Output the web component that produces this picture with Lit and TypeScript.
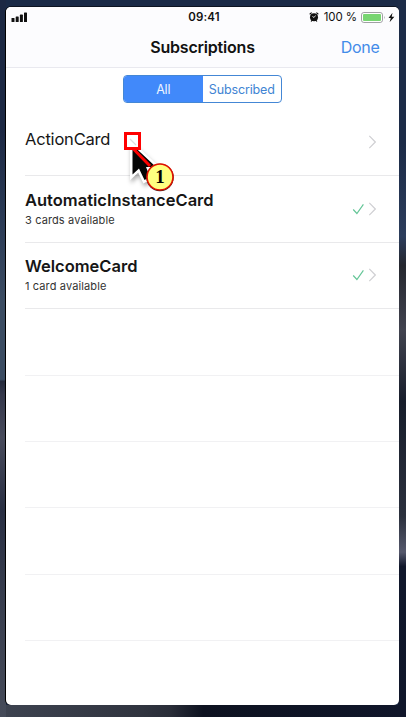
import { LitElement, html, css, svg, nothing } from "lit";
import { customElement, property } from "lit/decorators.js";

interface Subscription {
  name: string;
  detail?: string;
}

const subscriptions: Subscription[] = [
  { name: "ActionCard" },
  { name: "AutomaticInstanceCard", detail: "3 cards available" },
  { name: "WelcomeCard", detail: "1 card available" },
];

@customElement("status-bar")
class StatusBar extends LitElement {
  static styles = css`
    :host {
      display: grid;
      grid-template-columns: 1fr auto 1fr;
      align-items: center;
      height: 20px;
      padding: 0 4px 0 5px;
      font-size: 11.5px;
      color: #111;
    }
    svg { display: block; }
    .time { font-weight: 600; letter-spacing: 0.1px; margin-left: 2px; }
    .right { display: flex; align-items: center; justify-content: flex-end; }
    .percent { margin: 0 4px 0 5px; font-size: 11.5px; letter-spacing: -0.1px; white-space: nowrap; }
  `;
  render() {
    return html`
      <svg width="17" height="10" viewBox="0 0 17 10" fill="#111">
        <rect x="0.5" y="6" width="3" height="4" rx=".6" />
        <rect x="4.7" y="4.5" width="3" height="5.5" rx=".6" />
        <rect x="8.9" y="2.6" width="3" height="7.4" rx=".6" />
        <rect x="13" y="0.5" width="3" height="9.5" rx=".6" />
      </svg>
      <span class="time">09:41</span>
      <div class="right">
        <svg width="10" height="10" viewBox="0 0 10 10">
          <circle cx="5" cy="5.2" r="4" fill="#111" />
          <path d="M1 2 2.3.9M9 2 7.7.9M2.8 8.6 2.3 9.1M7.2 8.6l.5.5" stroke="#111" stroke-width="1.1" stroke-linecap="round" />
          <path d="M3.4 4.4 5 5.5 6.5 3.5" fill="none" stroke="#fff" stroke-width=".8" />
        </svg>
        <span class="percent">100 %</span>
        <svg width="34" height="11" viewBox="0 0 34 11">
          <rect x=".5" y=".5" width="21" height="10" rx="2.4" fill="#fff" stroke="#a0a0a4" />
          <rect x="2" y="2" width="18" height="7" rx="1" fill="#78d572" />
          <path d="M23 3.8q1.2 1.7 0 3.4z" fill="#8e8e93" />
          <path d="M31.5.8 27.5 6h2.3l-1.2 4.2L33.4 4.8H30.7z" fill="#111" />
        </svg>
      </div>
    `;
  }
}

@customElement("subscription-row")
class SubscriptionRow extends LitElement {
  @property({ attribute: false }) item?: Subscription;
  static styles = css`
    :host {
      display: flex;
      align-items: center;
      box-sizing: border-box;
      height: 66.4px;
      margin-left: 19px;
      padding-right: 23px;
      border-bottom: 1px solid #e9e9eb;
    }
    :host([empty]) { border-color: #f1f1f3; }
    .text { flex: 1; color: #161616; }
    .name { font-size: 16.5px; line-height: 22px; letter-spacing: -0.2px; }
    .single { margin-top: -7px; }
    .strong { font-weight: 600; letter-spacing: 0; margin-top: -1px; }
    .detail { font-size: 11px; line-height: 18px; letter-spacing: 0.12px; color: #333; }
    svg { display: block; margin-top: -1px; }
  `;
  render() {
    const item = this.item;
    if (!item) return nothing;
    return html`
      <div class="text">
        <div class="name ${item.detail ? "strong" : "single"}">${item.name}</div>
        ${item.detail ? html`<div class="detail">${item.detail}</div>` : nothing}
      </div>
      <svg width="24" height="14" viewBox="0 0 24 14" fill="none">
        ${item.detail
          ? svg`<path d="M1.2 7.5 4.9 11.5 11.4 2.3" stroke="#65c698" stroke-width="1.2" />`
          : nothing}
        <path d="m17.3.8 6 6.2-6 6.2" stroke="#d0d0d3" stroke-width="1.2" />
      </svg>
    `;
  }
}

@customElement("step-marker")
class StepMarker extends LitElement {
  static styles = css`
    :host { display: block; width: 60px; height: 65px; }
    svg { display: block; overflow: visible; }
    .cursor { filter: drop-shadow(1px 3px 2px #0005); paint-order: stroke; }
    .step { font: bold 19px "Liberation Serif", serif; }
  `;
  render() {
    return html`
      <svg width="60" height="65" viewBox="0 0 60 65">
        <path class="cursor" d="M13.500 15V44.500L20 38.500 25.500 50 31 47 27 37H37Z" fill="#050505" stroke="#fff" stroke-width="5" />
        <rect x="6.5" y="3.5" width="14" height="15" fill="#fff" stroke="#f00" stroke-width="3" />
        <path d="M11 9l6 6" stroke="#ddd" stroke-width="1.2" />
        <path d="M14.5 19 31 36" stroke="#f00" stroke-width="3" />
        <circle cx="41" cy="47.5" r="13.7" fill="#222" />
        <circle cx="41" cy="47" r="13" fill="#ffff80" stroke="#e01000" stroke-width="1.6" />
        <text class="step" x="41" y="53" text-anchor="middle">1</text>
      </svg>
    `;
  }
}

@customElement("app-root")
class AppRoot extends LitElement {
  static styles = css`
    :host {
      display: block;
      position: relative;
      box-sizing: border-box;
      width: 406px;
      height: 717px;
      padding: 7px 7px 11px 6px;
      overflow: hidden;
      font-family: Inter, "Liberation Sans", sans-serif;
      background:
        linear-gradient(#1c2843 0 18%, #2a3a55 30%, #3b4c62 42%, #3b4c62 52.9%, #252b3d 53.2%, #34384b 55%, #484b5c 61%, #292f43 71%, #3b4151 87%, #454b59) left / 6px 100% no-repeat,
        linear-gradient(#1c2b47 0 20%, #2c3d5c 33%, #25272f 37%, #41434f 46%, #171d2b 56%, #2b303d 72%, #55586c 77%, #10172b 79%, #10162a) right / 8px 100% no-repeat,
        linear-gradient(90deg, #3d4350, #30343f 35%, #292d38 42%, #0d1220 50%, #10162a) bottom / 100% 12px no-repeat,
        #1a2a47;
    }
    .phone {
      height: 698px;
      overflow: hidden;
      border-radius: 5px;
      background: #fff;
      box-shadow: -1px 0 0 #000, 0 -1px 0 #0008;
    }
    .header { height: 60px; background: #fcfcfe; border-bottom: 1px solid #e9e9ef; }
    .nav {
      display: grid;
      grid-template-columns: minmax(0, 1fr) auto minmax(0, 1fr);
      align-items: center;
      height: 40px;
    }
    .title { grid-column: 2; font-size: 16px; font-weight: 600; letter-spacing: -0.2px; color: #111; }
    .done { justify-self: end; margin-right: 19.5px; font-size: 16px; letter-spacing: -0.3px; color: #438be9; }
    .filter { display: flex; justify-content: center; padding: 7px 0; }
    .segments {
      display: grid;
      grid-template-columns: 1fr 1fr;
      box-sizing: border-box;
      width: 159px;
      height: 28px;
      overflow: hidden;
      border: 1px solid #4487d5;
      border-radius: 4px;
      font-size: 12.5px;
      line-height: 27px;
      letter-spacing: -0.15px;
      text-align: center;
      color: #4184d3;
    }
    .active { background: #4189fa; color: #eef5ff; }
    step-marker { position: absolute; left: 119px; top: 130px; }
  `;
  render() {
    return html`
      <div class="phone">
        <div class="header">
          <status-bar></status-bar>
          <div class="nav">
            <span class="title">Subscriptions</span>
            <span class="done">Done</span>
          </div>
        </div>
        <div class="filter">
          <div class="segments">
            <span class="active">All</span>
            <span>Subscribed</span>
          </div>
        </div>
        ${subscriptions.map((item) => html`<subscription-row .item=${item}></subscription-row>`)}
        ${Array.from({ length: 5 }, () => html`<subscription-row empty></subscription-row>`)}
      </div>
      <step-marker></step-marker>
    `;
  }
}
